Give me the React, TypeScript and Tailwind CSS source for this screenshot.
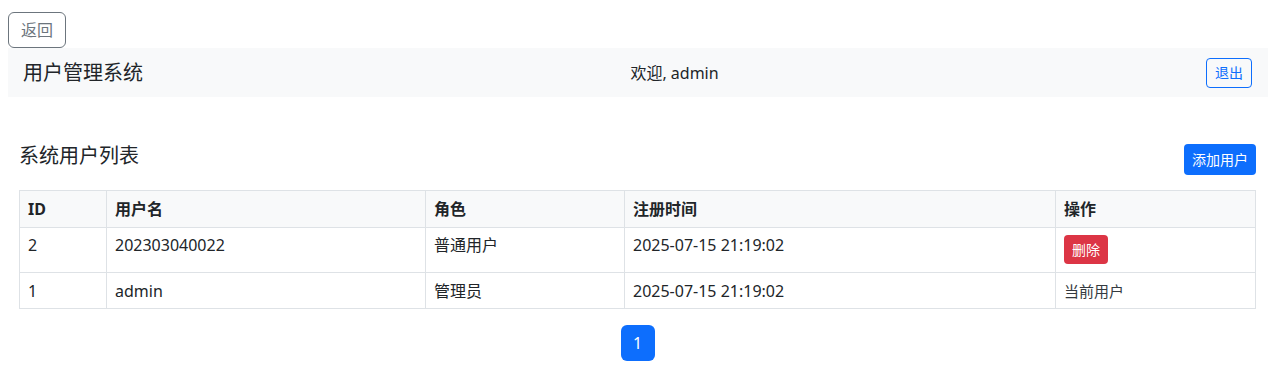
const users = [
  { id: 2, name: "202303040022", role: "普通用户", time: "2025-07-15 21:19:02", self: false },
  { id: 1, name: "admin", role: "管理员", time: "2025-07-15 21:19:02", self: true },
];

export default function App() {
  return (
    <div
      className="pl-2 pr-3 pt-3 text-[#212529] text-base leading-6"
      style={{ fontFamily: '"Noto Sans", "Noto Sans CJK SC", sans-serif' }}
    >
      <button className="h-9 px-3 border border-[#6c757d] rounded-md text-[#6c757d] text-base">
        返回
      </button>

      {/* navbar */}
      <div className="h-[49px] bg-[#f8f9fa] flex items-center justify-between pl-[15px] pr-4">
        <span className="text-xl">用户管理系统</span>
        <span>欢迎, admin</span>
        <button className="h-[30px] px-2 border border-[#0d6efd] rounded text-[#0d6efd] text-sm">
          退出
        </button>
      </div>

      <div className="pl-[11px] pr-3 pt-[47px]">
        <div className="flex items-start justify-between">
          <h2 className="text-xl leading-7 mt-[-2px]">系统用户列表</h2>
          <button className="h-[31px] px-2 bg-[#0d6efd] rounded text-white text-sm">
            添加用户
          </button>
        </div>

        <table className="w-full mt-[15px] border-collapse border border-[#dee2e6] table-fixed">
          <thead>
            <tr className="bg-[#f8f9fa] text-left h-[37px]">
              <th className="w-[87px] border border-[#dee2e6] px-2 py-0 font-bold">ID</th>
              <th className="w-[319px] border border-[#dee2e6] px-2 py-0 font-bold">用户名</th>
              <th className="w-[199px] border border-[#dee2e6] px-2 py-0 font-bold">角色</th>
              <th className="w-[431px] border border-[#dee2e6] px-2 py-0 font-bold">注册时间</th>
              <th className="border border-[#dee2e6] px-2 py-0 font-bold">操作</th>
            </tr>
          </thead>
          <tbody>
            {users.map((u) => (
              <tr key={u.id} className={u.self ? "h-[36px]" : "h-[45px] align-top"}>
                <td className={`border border-[#dee2e6] px-2 ${u.self ? "py-0" : "py-[5px]"}`}>{u.id}</td>
                <td className={`border border-[#dee2e6] px-2 ${u.self ? "py-0" : "py-[5px]"}`}>{u.name}</td>
                <td className={`border border-[#dee2e6] px-2 ${u.self ? "py-0" : "py-[5px]"}`}>{u.role}</td>
                <td className={`border border-[#dee2e6] px-2 ${u.self ? "py-0" : "py-[5px]"}`}>{u.time}</td>
                <td className={`border border-[#dee2e6] px-2 ${u.self ? "py-0" : "py-[7px]"}`}>
                  {u.self ? (
                    <span className="text-[15px] text-[#343a40]">当前用户</span>
                  ) : (
                    <button className="h-[29px] px-2 bg-[#dc3545] rounded text-white text-sm block">
                      删除
                    </button>
                  )}
                </td>
              </tr>
            ))}
          </tbody>
        </table>

        <div className="flex justify-center mt-4">
          <button className="w-[34px] h-9 bg-[#0d6efd] rounded-md text-white">1</button>
        </div>
      </div>
    </div>
  );
}
